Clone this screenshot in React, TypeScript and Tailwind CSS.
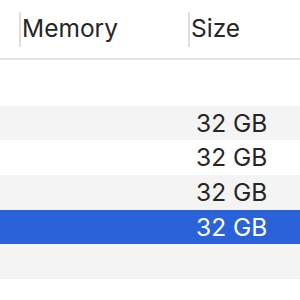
import React from 'react';

type Row = { size: string; tone: 'white' | 'gray' | 'selected'; height: string };

const rows: Row[] = [
  { size: '', tone: 'white', height: 'h-[46px]' },
  { size: '32 GB', tone: 'gray', height: 'h-[34px]' },
  { size: '32 GB', tone: 'white', height: 'h-[35px]' },
  { size: '32 GB', tone: 'gray', height: 'h-[35px]' },
  { size: '32 GB', tone: 'selected', height: 'h-[34px]' },
  { size: '', tone: 'gray', height: 'h-[35px]' },
];

const toneClass = {
  white: 'bg-white text-[#262626]',
  gray: 'bg-[#f4f4f4] text-[#262626]',
  selected: 'bg-[#2a62d9] text-white',
};

export default function App() {
  return (
    <div
      className="w-[300px] h-[300px] bg-white overflow-hidden"
      style={{ fontFamily: 'Inter, "Noto Sans", sans-serif' }}
    >
      {/* column headers */}
      <div className="h-[60px] flex items-center border-b-2 border-[#e4e4e4] text-[#262626] text-[24.5px]">
        <div className="w-[19px] shrink-0" />
        <div className="w-[169px] shrink-0 h-[35px] border-l-2 border-[#dedede] flex items-center pl-[1px] pb-[2px]">
          Memory
        </div>
        <div className="flex-1 h-[35px] border-l-2 border-[#dedede] flex items-center pl-[1px] pb-[2px]">
          Size
        </div>
      </div>

      {/* rows */}
      {rows.map((row, i) => (
        <div key={i} className={`${row.height} flex items-center text-[24.5px] ${toneClass[row.tone]}`}>
          <div className="w-[196px] shrink-0" />
          <div>{row.size}</div>
        </div>
      ))}
    </div>
  );
}
